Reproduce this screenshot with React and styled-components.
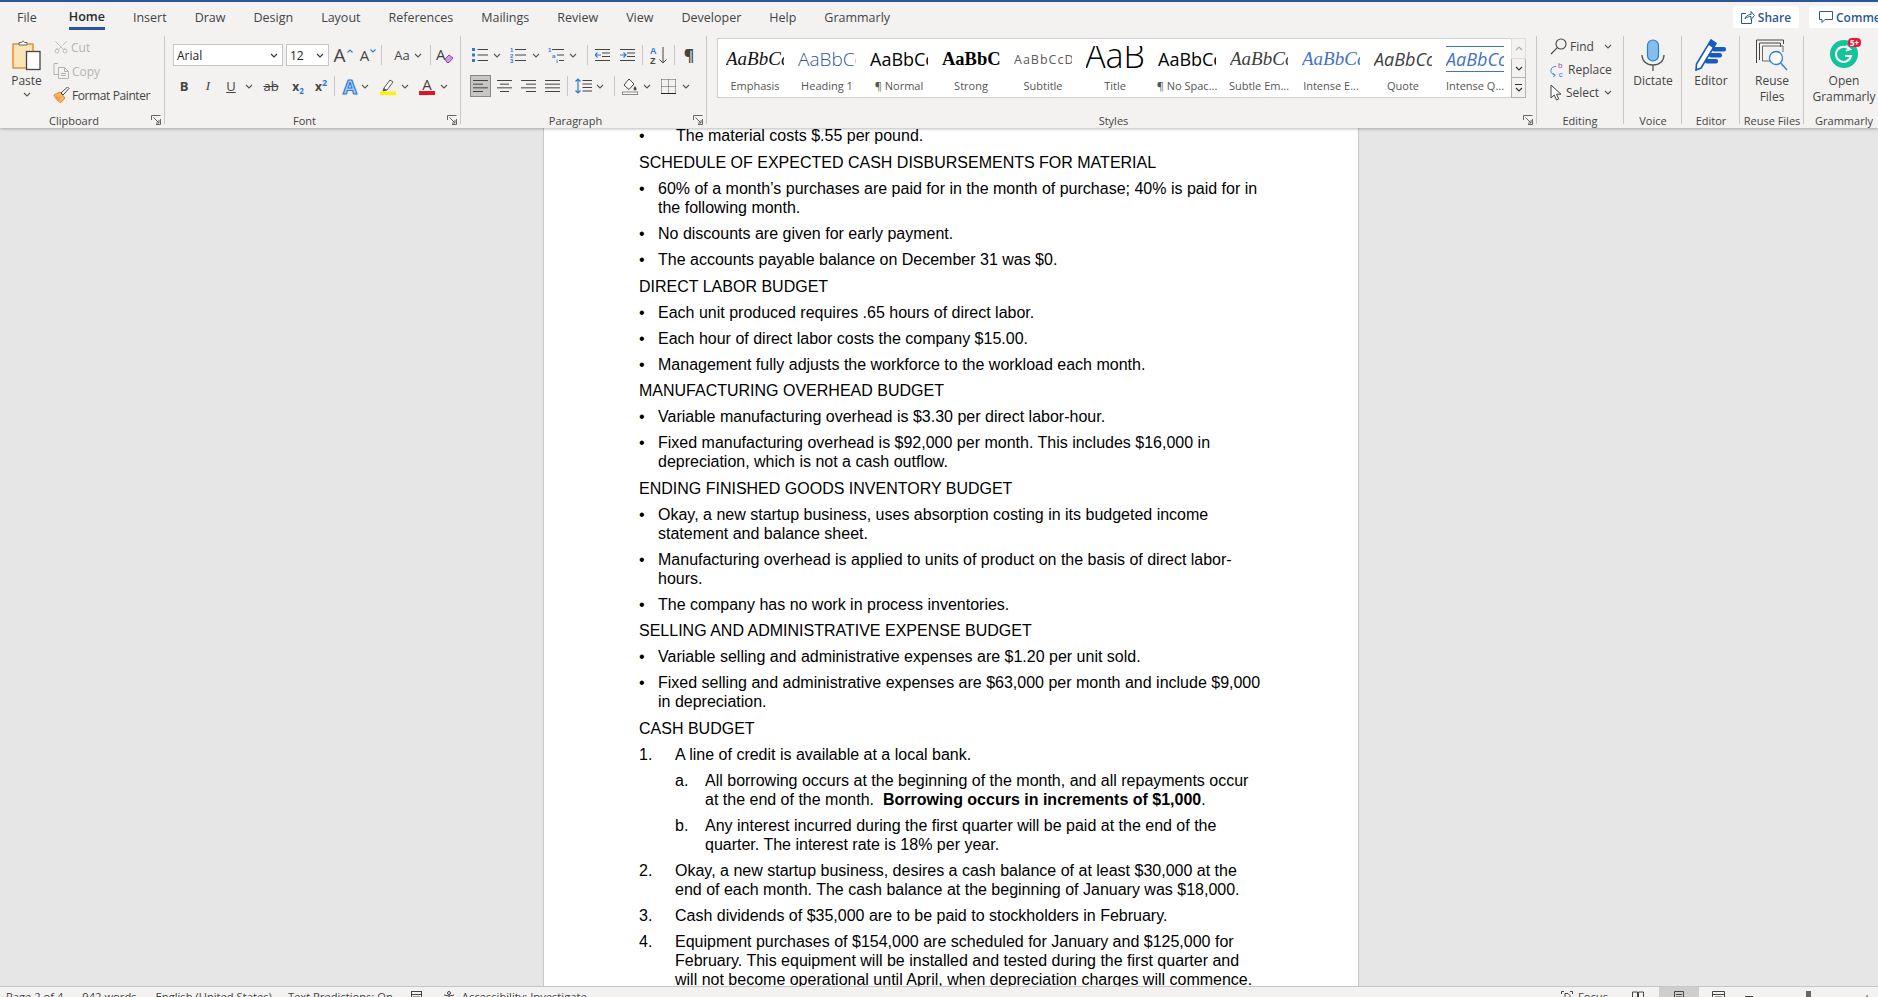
import React from 'react';
import styled, {createGlobalStyle} from 'styled-components';
import {Scissors} from 'lucide-react';

const UI_FONT = `'Open Sans', 'Noto Sans', sans-serif`;

const GlobalStyle = createGlobalStyle`
    * { box-sizing: border-box; }
    html, body { margin: 0; height: 100%; overflow: hidden; }
    body { font-family: ${UI_FONT}; background: #E6E6E6; }
    #root { height: 100%; }
`;

const Caret = ({color = '#555'}) => (
    <svg width="8" height="5" viewBox="0 0 8 5"><path d="M1 1l3 3 3-3" fill="none" stroke={color} strokeWidth="1.1"/></svg>
);

const Launcher = () => (
    <svg width="10" height="10" viewBox="0 0 10 10" fill="none" stroke="#666" strokeWidth="1">
        <path d="M.5 5V.5H9.500M9.500 4V9.500H5M2.500 2.500L8 8M5 8H8V5"/>
    </svg>
);

const SizeTick = ({up}) => (
    <TickSvg width="6" height="4" viewBox="0 0 6 4">
        <path d={up ? 'M.5 3.500L3 1l2.500 2.500' : 'M.5 .5L3 3 5.500 .5'} fill="none" stroke="#2B7CD3" strokeWidth="1.1"/>
    </TickSvg>
);

const Lines = ({rows, w = 15}) => (
    <svg width={w} height="16" viewBox={`0 0 ${w} 16`} stroke="#444" strokeWidth="1" fill="none">
        {rows.map(([x1, x2], i) => <path key={i} d={`M${x1} ${2.5 + i * 3.67}H${x2}`}/>)}
    </svg>
);

const PasteIcon = () => (
    <svg width="29" height="32" viewBox="0 0 29 32" fill="none">
        <rect x="1" y="4" width="20" height="24" fill="#FBE5B8" stroke="#E8862C" strokeWidth="1.4"/>
        <path d="M7 5V2.500h2.500L11 .8l1.600 1.700H15V5z" fill="#fff" stroke="#666"/>
        <rect x="14.500" y="11.500" width="13.500" height="18" fill="#fff" stroke="#444" strokeWidth="1.3"/>
    </svg>
);

const CopyIcon = () => (
    <svg width="17" height="16" viewBox="0 0 17 16" fill="none" stroke="#B5B3B1">
        <path d="M5 .5H1v11h4M5.500 4.500h6l4 4v7h-10zM11.500 4.500v4h4M8 10.500h5M8 12.500h5"/>
    </svg>
);

const PainterIcon = () => (
    <svg width="17" height="16" viewBox="0 0 17 16">
        <path d="M1 8l6-3 5 6-4 4.500C5 15 2 11 1 8z" fill="#F5B569" stroke="#E8862C"/>
        <path d="M3 10l2 1M5.500 13l1-3" stroke="#E8862C" fill="none"/>
        <path d="M8 6l2 2 6-6.500L14.500 0z" fill="#fff" stroke="#444"/>
    </svg>
);

const BulletsIcon = () => (
    <svg width="16" height="16" viewBox="0 0 16 16">
        <g fill="#2B7CD3"><rect y="1" width="3" height="3"/><rect y="6.500" width="3" height="3"/><rect y="12" width="3" height="3"/></g>
        <path d="M5.500 2.500H16M5.500 8H16M5.500 13.500H16" stroke="#444"/>
    </svg>
);

const SmallNum = ({x, y, children}) => <text x={x} y={y} fontSize="6" fontWeight="700" fill="#2B7CD3" fontFamily="Liberation Sans, sans-serif">{children}</text>;

const NumberingIcon = () => (
    <svg width="16" height="16" viewBox="0 0 16 16">
        <SmallNum x="0" y="5">1</SmallNum><SmallNum x="0" y="10.500">2</SmallNum><SmallNum x="0" y="16">3</SmallNum>
        <path d="M5 2.500H16M5 8H16M5 13.500H16" stroke="#444"/>
    </svg>
);

const MultilevelIcon = () => (
    <svg width="16" height="16" viewBox="0 0 16 16">
        <SmallNum x="0" y="5">1</SmallNum><SmallNum x="4" y="10.500">a</SmallNum><SmallNum x="8" y="16">i</SmallNum>
        <path d="M4 2.500H16M9 8H16M11 13.500H16" stroke="#444"/>
    </svg>
);

const IndentIcon = ({flip}) => (
    <svg width="15" height="14" viewBox="0 0 15 14" fill="none">
        <path d="M0 1.500H15M7 5H15M7 8.500H15M0 12.500H15" stroke="#444"/>
        <path d={flip ? 'M0 7H6M3.500 4.500L6 7 3.500 9.500' : 'M6 7H0M2.500 4.500L0 7l2.500 2.500'} stroke="#2B7CD3" strokeWidth="1.2"/>
    </svg>
);

const SortIcon = () => (
    <svg width="18" height="18" viewBox="0 0 18 18">
        <text x="0" y="8" fontSize="9" fontWeight="700" fill="#2B7CD3" fontFamily="Liberation Sans, sans-serif">A</text>
        <text x="0" y="17.500" fontSize="9" fontWeight="700" fill="#444" fontFamily="Liberation Sans, sans-serif">Z</text>
        <path d="M13 1V17M9.500 13.500L13 17l3.500-3.500" stroke="#444" fill="none"/>
    </svg>
);

const LineSpacingIcon = () => (
    <svg width="17" height="16" viewBox="0 0 17 16" fill="none">
        <path d="M3 1V15M.5 3.500L3 1l2.500 2.500M.5 12.500L3 15l2.500-2.500" stroke="#2B7CD3" strokeWidth="1.2"/>
        <path d="M7.500 2.500H17M7.500 6H17M7.500 9.500H17M7.500 13H17" stroke="#444"/>
    </svg>
);

const ShadingIcon = () => (
    <svg width="16" height="17" viewBox="0 0 16 17" fill="none">
        <path d="M7 1L2 7l5 4.500L12 6z" fill="#fff" stroke="#444"/>
        <path d="M13 8c1 1.500 1.500 2.200 1.500 3a1.400 1.400 0 01-2.900 0c0-.8.4-1.500 1.400-3z" fill="#444"/>
        <rect x=".5" y="14" width="15" height="2.500" fill="#fff" stroke="#888"/>
    </svg>
);

const BordersIcon = () => (
    <svg width="15" height="15" viewBox="0 0 15 15" fill="none">
        <path d="M.5.5H15M.5 7.500H15M.5.5V15M7.500.5V15M14.500.5V15" stroke="#555" strokeDasharray="1 1"/>
        <path d="M0 14.500H15" stroke="#222"/>
    </svg>
);

const FindIcon = () => (
    <svg width="17" height="17" viewBox="0 0 17 17" fill="none" stroke="#444" strokeWidth="1.1">
        <circle cx="11" cy="6" r="5"/><path d="M7.300 9.700L1 16"/>
    </svg>
);

const ReplaceIcon = () => (
    <svg width="15" height="17" viewBox="0 0 17 19" fill="none">
        <text x="9" y="8" fontSize="9" fill="#A24BB0" fontFamily="Liberation Sans, sans-serif">b</text>
        <text x="10" y="18" fontSize="9" fill="#2B7CD3" fontFamily="Liberation Sans, sans-serif">c</text>
        <path d="M7 6C3 6 1 8 1 11s2 4 5 5M3.500 13.500L6 16l-2.500 2" stroke="#2B7CD3"/>
    </svg>
);

const SelectIcon = () => (
    <svg width="13" height="17" viewBox="0 0 13 17">
        <path d="M1 1v13l3.200-3 2.300 5 2.300-1-2.300-4.800H11z" fill="#fff" stroke="#444"/>
    </svg>
);

const MicIcon = () => (
    <svg width="24" height="32" viewBox="0 0 24 32" fill="none">
        <rect x="6.500" y="1" width="11" height="21" rx="5.500" fill="#83BEEC" stroke="#2B7CD3" strokeWidth="1.2"/>
        <path d="M1 16c0 6 4.500 10 11 10s11-4 11-10M12 26v6" stroke="#555" strokeWidth="1.3"/>
    </svg>
);

const EditorIcon = () => (
    <svg width="32" height="32" viewBox="0 0 32 32" fill="none">
        <path d="M16 1l5 3.500L6 29l-5 2 .5-6z" fill="#fff" stroke="#185ABD" strokeWidth="1.6"/>
        <path d="M16 1l5 3.500-3 4.500-5-3.500z" fill="#185ABD"/>
        <rect x="17" y="8" width="14" height="4.500" rx="2" fill="#185ABD"/>
        <rect x="14" y="14" width="13" height="4.500" rx="2" fill="#185ABD"/>
        <rect x="10" y="20" width="13" height="4.500" rx="2" fill="#185ABD"/>
    </svg>
);

const ReuseIcon = () => (
    <svg width="32" height="32" viewBox="0 0 32 32" fill="none">
        <path d="M.5 24V1H27.500V5M3.500 21V4H24.500V8" stroke="#444"/>
        <path d="M6.500 22V7H27V13" stroke="#666"/>
        <path d="M6.500 22H14" stroke="#666"/>
        <circle cx="20" cy="19" r="6.500" fill="#fff" stroke="#2B7CD3" strokeWidth="1.3"/>
        <path d="M24.700 24L31 31" stroke="#2B7CD3" strokeWidth="1.4"/>
    </svg>
);

const GrammarlyIcon = () => (
    <svg width="30" height="30" viewBox="0 0 30 30">
        <circle cx="15" cy="15" r="14" fill="#15C39A"/>
        <path d="M20.500 10.500A7.600 7.600 0 1 0 22 17h-6" fill="none" stroke="#fff" strokeWidth="2"/>
        <path d="M17 6.500l4.500 3.800-4.800 1.400" fill="none" stroke="#fff" strokeWidth="1.6"/>
    </svg>
);

const ShareIcon = () => (
    <svg width="14" height="14" viewBox="0 0 14 14" fill="none" stroke="#2B579A">
        <path d="M5 3.500H.5v10h10V9M4 9c.5-3 3-4.500 6-4.500V1.500l3.500 4-3.500 4v-3C8 6.500 5.500 7 4 9z"/>
    </svg>
);

const CommentIcon = () => (
    <svg width="14" height="14" viewBox="0 0 14 14" fill="none" stroke="#2B579A">
        <path d="M.5 1.500h13v8H6L3 12.500v-3H.5z"/>
    </svg>
);

const ClearIcon = () => (
    <svg width="18" height="18" viewBox="0 0 18 18" fill="none">
        <text x="0" y="14" fontSize="15" fill="#444" fontFamily="Open Sans, sans-serif">A</text>
        <path d="M9 13l4-4 4 3-4 4.500h-2z" fill="#C9A0DC" stroke="#8E3FA8"/>
    </svg>
);

const HighlightIcon = () => (
    <svg width="16" height="17" viewBox="0 0 16 17" fill="none">
        <path d="M4 10l6-8 3 2-6 8-4 1z" fill="#fff" stroke="#555"/>
        <path d="M4 10l3 2-4 1z" fill="#555"/>
        <rect y="13.500" width="16" height="3.500" fill="#FFF200"/>
    </svg>
);

const tabs = ['File', 'Home', 'Insert', 'Draw', 'Design', 'Layout', 'References', 'Mailings', 'Review', 'View', 'Developer', 'Help', 'Grammarly'];

const styleItems = [
    {label: 'Emphasis', kind: 'emphasis', text: 'AaBbCcDd'},
    {label: 'Heading 1', kind: 'heading', text: 'AaBbCcDd'},
    {label: '¶ Normal', kind: 'normal', text: 'AaBbCcDd'},
    {label: 'Strong', kind: 'strong', text: 'AaBbCcDd'},
    {label: 'Subtitle', kind: 'subtitle', text: 'AaBbCcDd'},
    {label: 'Title', kind: 'title', text: 'AaB'},
    {label: '¶ No Spac...', kind: 'normal', text: 'AaBbCcDd'},
    {label: 'Subtle Em...', kind: 'subtle', text: 'AaBbCcDd'},
    {label: 'Intense E...', kind: 'intense', text: 'AaBbCcDd'},
    {label: 'Quote', kind: 'quote', text: 'AaBbCcDd'},
    {label: 'Intense Q...', kind: 'intenseQuote', text: 'AaBbCcDd'}
];

const doc = [
    {type: 'bullet', wide: true, lines: ['The material costs $.55 per pound.']},
    {type: 'head', lines: ['SCHEDULE OF EXPECTED CASH DISBURSEMENTS FOR MATERIAL']},
    {type: 'bullet', lines: ['60% of a month’s purchases are paid for in the month of purchase; 40% is paid for in', 'the following month.']},
    {type: 'bullet', lines: ['No discounts are given for early payment.']},
    {type: 'bullet', lines: ['The accounts payable balance on December 31 was $0.']},
    {type: 'head', lines: ['DIRECT LABOR BUDGET']},
    {type: 'bullet', lines: ['Each unit produced requires .65 hours of direct labor.']},
    {type: 'bullet', lines: ['Each hour of direct labor costs the company $15.00.']},
    {type: 'bullet', lines: ['Management fully adjusts the workforce to the workload each month.']},
    {type: 'head', lines: ['MANUFACTURING OVERHEAD BUDGET']},
    {type: 'bullet', lines: ['Variable manufacturing overhead is $3.30 per direct labor-hour.']},
    {type: 'bullet', lines: ['Fixed manufacturing overhead is $92,000 per month. This includes $16,000 in', 'depreciation, which is not a cash outflow.']},
    {type: 'head', lines: ['ENDING FINISHED GOODS INVENTORY BUDGET']},
    {type: 'bullet', lines: ['Okay, a new startup business, uses absorption costing in its budgeted income', 'statement and balance sheet.']},
    {type: 'bullet', lines: ['Manufacturing overhead is applied to units of product on the basis of direct labor-', 'hours.']},
    {type: 'bullet', lines: ['The company has no work in process inventories.']},
    {type: 'head', lines: ['SELLING AND ADMINISTRATIVE EXPENSE BUDGET']},
    {type: 'bullet', lines: ['Variable selling and administrative expenses are $1.20 per unit sold.']},
    {type: 'bullet', lines: ['Fixed selling and administrative expenses are $63,000 per month and include $9,000', 'in depreciation.']},
    {type: 'head', lines: ['CASH BUDGET']},
    {type: 'number', mark: '1.', lines: ['A line of credit is available at a local bank.']},
    {type: 'sub', mark: 'a.', lines: ['All borrowing occurs at the beginning of the month, and all repayments occur', <>at the end of the month.&nbsp; <b>Borrowing occurs in increments of $1,000</b>.</>]},
    {type: 'sub', mark: 'b.', lines: ['Any interest incurred during the first quarter will be paid at the end of the', 'quarter. The interest rate is 18% per year.']},
    {type: 'number', mark: '2.', lines: ['Okay, a new startup business, desires a cash balance of at least $30,000 at the', 'end of each month. The cash balance at the beginning of January was $18,000.']},
    {type: 'number', mark: '3.', lines: ['Cash dividends of $35,000 are to be paid to stockholders in February.']},
    {type: 'number', mark: '4.', lines: ['Equipment purchases of $154,000 are scheduled for January and $125,000 for', 'February. This equipment will be installed and tested during the first quarter and', 'will not become operational until April, when depreciation charges will commence.']}
];

function DocBlock({item}) {
    const text = item.lines.map((line, i) => <div key={i}>{line}</div>);
    if (item.type === 'head') return <Para>{text}</Para>;
    if (item.type === 'bullet') {
        return <Para $row><Marker $w={item.wide ? 37 : 19}>•</Marker><div>{text}</div></Para>;
    }
    if (item.type === 'number') return <Para $row><Marker $w={36}>{item.mark}</Marker><div>{text}</div></Para>;
    return <Para $row $inset={36}><Marker $w={30}>{item.mark}</Marker><div>{text}</div></Para>;
}

function Group({w, title, launcher, last, shift, children}) {
    return (
        <GroupBox $w={w} $last={last} $shift={shift}>
            <GroupBody>{children}</GroupBody>
            <GroupFoot>
                <GroupTitle>{title}</GroupTitle>
                {launcher && <FootEnd><Launcher/></FootEnd>}
            </GroupFoot>
        </GroupBox>
    );
}

export default function App() {
    return (
        <Window>
            <GlobalStyle/>
            <Ribbon>
                <TabRow>
                    {tabs.map(t => <Tab key={t} $active={t === 'Home'}><span>{t}</span></Tab>)}
                    <TopButtons>
                        <TopButton $w={66}><ShareIcon/>Share</TopButton>
                        <TopButton $w={100}><CommentIcon/>Comments</TopButton>
                    </TopButtons>
                </TabRow>
                <Groups>
                    <Group w={165} title="Clipboard" launcher>
                        <ClipboardBody>
                            <PasteButton>
                                <PasteIcon/>
                                <span>Paste</span>
                                <Caret/>
                            </PasteButton>
                            <ClipList>
                                <ClipRow $off><CutIcon size={16} color="#B5B3B1" strokeWidth={1.2}/>Cut</ClipRow>
                                <ClipRow $off><CopyIcon/>Copy</ClipRow>
                                <ClipRow $tight><PainterIcon/>Format Painter</ClipRow>
                            </ClipList>
                        </ClipboardBody>
                    </Group>
                    <Group w={296} title="Font" launcher>
                        <Rows>
                            <Row>
                                <Combo $w={110}>Arial<Caret color="#333"/></Combo>
                                <Combo $w={43} $ml={3}>12<Caret color="#333"/></Combo>
                                <Cell $w={20} $ml={4}><Glyph $size={19}>A</Glyph><SizeTick up/></Cell>
                                <Cell $w={20} $ml={5}><Glyph $size={15}>A</Glyph><SizeTick/></Cell>
                                <Sep $ml={3}/>
                                <Cell $w={26} $ml={7}><Glyph $size={13}>Aa</Glyph></Cell>
                                <Cell $w={10} $ml={-2}><Caret/></Cell>
                                <Sep $ml={7}/>
                                <Cell $w={22} $ml={3}><ClearIcon/></Cell>
                            </Row>
                            <Row>
                                <Cell $w={22}><Glyph $size={13} $bold>B</Glyph></Cell>
                                <Cell $w={22} $ml={2}><Glyph $size={13} $italic $serif>I</Glyph></Cell>
                                <Cell $w={22} $ml={1}><Glyph $size={13} $under>U</Glyph></Cell>
                                <Cell $w={12} $ml={1}><Caret/></Cell>
                                <Cell $w={22} $ml={5}><Glyph $size={13} $strike>ab</Glyph></Cell>
                                <Cell $w={22} $ml={5}><Glyph $size={12} $bold>x<Sub>2</Sub></Glyph></Cell>
                                <Cell $w={22} $ml={1}><Glyph $size={12} $bold>x<Sup>2</Sup></Glyph></Cell>
                                <Sep $ml={2}/>
                                <Cell $w={22} $ml={4}><TextEffect>A</TextEffect></Cell>
                                <Cell $w={8}><Caret/></Cell>
                                <Cell $w={22} $ml={8}><HighlightIcon/></Cell>
                                <Cell $w={10} $ml={1}><Caret/></Cell>
                                <Cell $w={22} $ml={6}><ColorA>A</ColorA></Cell>
                                <Cell $w={10} $ml={1}><Caret/></Cell>
                            </Row>
                        </Rows>
                    </Group>
                    <Group w={246} title="Paragraph" launcher>
                        <Rows>
                            <Row>
                                <Cell $w={21}><BulletsIcon/></Cell>
                                <Cell $w={13}><Caret/></Cell>
                                <Cell $w={24} $ml={3}><NumberingIcon/></Cell>
                                <Cell $w={12}><Caret/></Cell>
                                <Cell $w={22} $ml={3}><MultilevelIcon/></Cell>
                                <Cell $w={12}><Caret/></Cell>
                                <Sep $ml={8}/>
                                <Cell $w={21} $ml={4}><IndentIcon/></Cell>
                                <Cell $w={22} $ml={3}><IndentIcon flip/></Cell>
                                <Sep $ml={4}/>
                                <Cell $w={23} $ml={4}><SortIcon/></Cell>
                                <Sep $ml={4}/>
                                <Cell $w={20} $ml={4}><Glyph $size={16} $bold>¶</Glyph></Cell>
                            </Row>
                            <Row>
                                <Cell $w={21} $ml={1} $active><Lines rows={[[0, 15], [0, 10], [0, 15], [0, 10]]}/></Cell>
                                <Cell $w={22} $ml={2}><Lines rows={[[0, 15], [3, 12], [0, 15], [3, 12]]}/></Cell>
                                <Cell $w={22} $ml={2}><Lines rows={[[0, 15], [5, 15], [0, 15], [5, 15]]}/></Cell>
                                <Cell $w={22} $ml={2}><Lines rows={[[0, 15], [0, 15], [0, 15], [0, 15]]}/></Cell>
                                <Sep $ml={4}/>
                                <Cell $w={22} $ml={4}><LineSpacingIcon/></Cell>
                                <Cell $w={12}><Caret/></Cell>
                                <Sep $ml={8}/>
                                <Cell $w={22} $ml={4}><ShadingIcon/></Cell>
                                <Cell $w={12}><Caret/></Cell>
                                <Cell $w={23} $ml={4}><BordersIcon/></Cell>
                                <Cell $w={12}><Caret/></Cell>
                            </Row>
                        </Rows>
                    </Group>
                    <Group w={830} title="Styles" launcher>
                        <Gallery>
                            {styleItems.map(s => (
                                <StyleItem key={s.label + s.kind}>
                                    <Preview $kind={s.kind}>{s.text}</Preview>
                                    <span>{s.label}</span>
                                </StyleItem>
                            ))}
                            <GalleryScroll>
                                <ScrollBtn $off><Caret color="#AAA"/></ScrollBtn>
                                <ScrollBtn><Caret color="#333"/></ScrollBtn>
                                <ScrollBtn $more><Caret color="#333"/></ScrollBtn>
                            </GalleryScroll>
                        </Gallery>
                    </Group>
                    <Group w={87} title="Editing">
                        <EditList>
                            <EditRow><FindIcon/>Find<EditCaret $gap={7}><Caret/></EditCaret></EditRow>
                            <EditRow><ReplaceIcon/>Replace</EditRow>
                            <EditRow><SelectIcon/>Select<EditCaret $gap={2}><Caret/></EditCaret></EditRow>
                        </EditList>
                    </Group>
                    <Group w={58} shift={1} title="Voice"><BigButton><MicIcon/><span>Dictate</span></BigButton></Group>
                    <Group w={58} shift={1} title="Editor"><BigButton><EditorIcon/><span>Editor</span></BigButton></Group>
                    <Group w={64} shift={1} title="Reuse Files"><BigButton><ReuseIcon/><span>Reuse<br/>Files</span></BigButton></Group>
                    <Group w={74} shift={6} title="Grammarly" last>
                        <BigButton>
                            <BadgeWrap><GrammarlyIcon/><Badge>5+</Badge></BadgeWrap>
                            <span>Open<br/>Grammarly</span>
                        </BigButton>
                    </Group>
                </Groups>
            </Ribbon>
            <Canvas>
                <Page>
                    {doc.map((item, i) => <DocBlock key={i} item={item}/>)}
                </Page>
            </Canvas>
            <StatusBar>
                <StatusText $ml={6}>Page 2 of 4</StatusText>
                <StatusText $ml={19}>942 words</StatusText>
                <StatusText $ml={19}>English (United States)</StatusText>
                <StatusText $ml={16}>Text Predictions: On</StatusText>
                <StatusIcon $ml={18}><rect x=".5" y=".5" width="10" height="11" fill="none" stroke="#444"/><path d="M.5 3.500h10M2 6h7M2 8.500h5" stroke="#444"/></StatusIcon>
                <StatusIcon $ml={19}><circle cx="6" cy="2" r="1.500" fill="none" stroke="#444"/><path d="M1 4l5 1 5-1M6 5v3M3 12l3-4 3 4" stroke="#444" fill="none"/></StatusIcon>
                <StatusText $ml={6}>Accessibility: Investigate</StatusText>
                <StatusRight>
                    <StatusIcon><path d="M.5 3V.5H3M9 .5h2.500V3M.5 9v2.500H3M4 2.500h3l2 2v7H4z" fill="none" stroke="#444"/></StatusIcon>
                    <StatusText $ml={4}>Focus</StatusText>
                    <StatusIcon $ml={24}><path d="M.5 1h5v11h-5zM6.500 1h5v11h-5z" fill="none" stroke="#444"/></StatusIcon>
                    <ActiveView $ml={14}><StatusIcon><path d="M1.500.5h9v12h-9zM3 3.500h6M3 6h6M3 8.500h6" fill="none" stroke="#444"/></StatusIcon></ActiveView>
                    <StatusIcon $ml={13}><path d="M.5.5h12v12H.5zM.5 3.500h12M3 6h7M3 8.500h4" fill="none" stroke="#444"/></StatusIcon>
                    <ZoomMinus/>
                    <ZoomThumb/>
                    <ZoomPlus>+</ZoomPlus>
                </StatusRight>
            </StatusBar>
        </Window>
    );
}

const TickSvg = styled.svg`
    flex: none;
    margin: -8px 0 0 1px;
`;

const CutIcon = styled(Scissors)`
    transform: rotate(-90deg);
`;

const Window = styled.div`
    height: 100vh;
    display: flex;
    flex-direction: column;
    overflow: hidden;
`;

const Ribbon = styled.header`
    flex: none;
    height: 128px;
    border-top: 2px solid #2B579A;
    background: #F3F2F1;
    box-shadow: 0 1px 3px rgba(0, 0, 0, .28);
    position: relative;
    z-index: 1;
`;

const TabRow = styled.nav`
    height: 31px;
    padding: 1px 0 0 3px;
    display: flex;
    align-items: center;
`;

const Tab = styled.div`
    padding: 0 14px;
    height: 30px;
    display: flex;
    font-size: 12.5px;
    color: ${p => (p.$active ? '#2B2B2B' : '#444')};
    font-weight: ${p => (p.$active ? 600 : 400)};

    &:first-child { margin-right: 4px; }

    span {
        height: ${p => (p.$active ? 27 : 28)}px;
        padding-top: ${p => (p.$active ? 3 : 0)}px;
        display: flex;
        align-items: center;
        border-bottom: ${p => (p.$active ? '3px solid #2B579A' : 'none')};
    }
`;

const TopButtons = styled.div`
    margin: -2px -31px 0 auto;
    display: flex;
    gap: 10px;
`;

const TopButton = styled.div`
    flex: none;
    width: ${p => p.$w}px;
    height: 22px;
    background: #FFF;
    border-radius: 2px;
    display: flex;
    align-items: center;
    justify-content: center;
    gap: 3px;
    font-size: 12px;
    font-weight: 600;
    color: #2B579A;
`;

const Groups = styled.div`
    margin-top: 3px;
    height: 88px;
    display: flex;
`;

const GroupBox = styled.section`
    flex: none;
    width: ${p => p.$w}px;
    padding-left: ${p => p.$shift || 0}px;
    display: flex;
    flex-direction: column;
    border-right: ${p => (p.$last ? 'none' : '1px solid #C8C6C4')};
`;

const GroupBody = styled.div`
    flex: 1;
    min-height: 0;
`;

const GroupFoot = styled.div`
    flex: none;
    height: 16px;
    margin-bottom: -4px;
    display: flex;
    align-items: center;
`;

const GroupTitle = styled.span`
    flex: 1;
    font-size: 11px;
    text-align: center;
    color: #444;
    white-space: nowrap;
`;

const FootEnd = styled.span`
    flex: none;
    width: 16px;
    display: flex;
    justify-content: flex-end;
    padding-right: 3px;
`;

const ClipboardBody = styled.div`
    display: flex;
    height: 100%;
`;

const PasteButton = styled.div`
    flex: none;
    width: 53px;
    padding-top: 4px;
    display: flex;
    flex-direction: column;
    align-items: center;
    font-size: 12px;
    color: #444;

    span { margin: 1px 0 3px; line-height: 16px; }
`;

const ClipList = styled.div`
    margin-top: -1px;
    display: flex;
    flex-direction: column;
`;

const ClipRow = styled.div`
    height: 24px;
    display: flex;
    align-items: center;
    gap: 2px;
    font-size: 12px;
    letter-spacing: ${p => (p.$tight ? '-.4px' : '0')};
    white-space: nowrap;
    color: ${p => (p.$off ? '#B5B3B1' : '#444')};
`;

const Rows = styled.div`
    padding: 8px 0 0 8px;
    display: flex;
    flex-direction: column;
    gap: 9px;
`;

const Row = styled.div`
    height: 22px;
    display: flex;
    align-items: center;
`;

const Combo = styled.div`
    flex: none;
    width: ${p => p.$w}px;
    height: 22px;
    margin-left: ${p => p.$ml || 0}px;
    padding: 0 4px 0 3px;
    display: flex;
    align-items: center;
    justify-content: space-between;
    background: #FFF;
    border: 1px solid #C8C6C4;
    font-size: 12px;
    color: #222;
`;

const Cell = styled.div`
    flex: none;
    width: ${p => p.$w}px;
    height: 22px;
    margin-left: ${p => p.$ml || 0}px;
    display: flex;
    align-items: center;
    justify-content: center;
    background: ${p => (p.$active ? '#C8C6C4' : 'none')};
    border: ${p => (p.$active ? '1px solid #8A8886' : 'none')};
`;

const Sep = styled.div`
    flex: none;
    width: 1px;
    height: 20px;
    margin-left: ${p => p.$ml || 0}px;
    background: #C8C6C4;
`;

const Glyph = styled.span`
    font-family: ${p => (p.$serif ? `'Liberation Serif', serif` : UI_FONT)};
    font-size: ${p => p.$size}px;
    font-weight: ${p => (p.$bold ? 700 : 400)};
    font-style: ${p => (p.$italic ? 'italic' : 'normal')};
    text-decoration: ${p => (p.$under ? 'underline' : p.$strike ? 'line-through' : 'none')};
    color: #444;
    white-space: nowrap;
`;

const Sup = styled.sup`
    font-size: 9px;
    color: #2B7CD3;
    vertical-align: 5px;
    line-height: 0;
`;

const Sub = styled.sub`
    font-size: 8px;
    color: #2B7CD3;
    vertical-align: -3px;
    line-height: 0;
`;

const TextEffect = styled.span`
    font-size: 20px;
    font-weight: 700;
    color: #A9CFF0;
    -webkit-text-stroke: 1.2px #2B7CD3;
`;

const ColorA = styled.span`
    width: 16px;
    height: 18px;
    line-height: 14px;
    text-align: center;
    font-size: 15px;
    color: #444;
    border-bottom: 4px solid #E81123;
`;

const Gallery = styled.div`
    margin: 2px 0 0 10px;
    width: 808px;
    height: 60px;
    display: flex;
    padding-left: 1px;
    background: #FFF;
    border: 1px solid #D2D0CE;
`;

const StyleItem = styled.div`
    flex: none;
    width: 72px;
    display: flex;
    flex-direction: column;
    align-items: center;
    overflow: hidden;

    > span:last-child {
        height: 18px;
        margin-top: 5px;
        font-size: 11px;
        line-height: 18px;
        color: #555;
        white-space: nowrap;
    }
`;

const previewKinds = {
    emphasis: `font: italic 19px 'Liberation Serif', serif; color: #111;`,
    heading: `font: 300 19px 'Open Sans', sans-serif; color: #2F5496;`,
    normal: `font: 500 18px 'Open Sans', sans-serif; color: #000;`,
    strong: `font: 700 18.5px 'Liberation Serif', serif; color: #000;`,
    subtitle: `font: 400 12.5px 'Open Sans', sans-serif; color: #5A5A5A; letter-spacing: 1px;`,
    title: `font: 300 34px 'Open Sans', sans-serif; color: #000; line-height: 26px; padding-bottom: 8px;`,
    subtle: `font: italic 19px 'Liberation Serif', serif; color: #404040;`,
    intense: `font: italic 19px 'Liberation Serif', serif; color: #4472C4;`,
    quote: `font: italic 400 18px 'Open Sans', sans-serif; color: #404040;`,
    intenseQuote: `font: italic 400 18px 'Open Sans', sans-serif; color: #4472C4; border-top: 1px solid #4472C4; border-bottom: 1px solid #4472C4;`
};

const Preview = styled.div`
    width: 58px;
    height: 26px;
    margin-top: 7px;
    display: flex;
    align-items: center;
    justify-content: ${p => (p.$kind === 'title' ? 'center' : 'flex-start')};
    overflow: hidden;
    white-space: nowrap;
    ${p => previewKinds[p.$kind]}
`;

const GalleryScroll = styled.div`
    flex: none;
    margin: -1px -1px -1px auto;
    width: 15px;
    display: flex;
    flex-direction: column;
`;

const ScrollBtn = styled.div`
    flex: 1;
    display: flex;
    flex-direction: column;
    gap: 2px;
    align-items: center;
    justify-content: center;
    background: #F3F2F1;
    border: 1px solid #B5B3B1;
    border-top-width: ${p => (p.$off ? 1 : 0)}px;
    border-color: ${p => (p.$off ? '#DDD' : '#B5B3B1')};

    svg { transform: ${p => (p.$off ? 'rotate(180deg)' : 'none')}; }

    &::before {
        content: '';
        display: ${p => (p.$more ? 'block' : 'none')};
        width: 7px;
        height: 1px;
        background: #333;
    }
`;

const EditList = styled.div`
    margin-top: -1px;
    padding-left: 13px;
    display: flex;
    flex-direction: column;
`;

const EditRow = styled.div`
    height: 23px;
    display: flex;
    align-items: center;
    gap: 3px;
    font-size: 12px;
    color: #444;
    white-space: nowrap;
`;

const EditCaret = styled.span`
    display: flex;
    margin-left: ${p => p.$gap}px;
`;

const BigButton = styled.div`
    padding-top: 3px;
    display: flex;
    flex-direction: column;
    align-items: center;
    gap: 2px;
    font-size: 12px;
    color: #444;
    text-align: center;

    span { line-height: 16px; white-space: nowrap; }
`;

const BadgeWrap = styled.div`
    position: relative;
    height: 32px;
`;

const Badge = styled.div`
    position: absolute;
    top: -1px;
    right: -2px;
    width: 13px;
    height: 9px;
    border-radius: 4px;
    background: #E8173A;
    color: #FFF;
    font-size: 8px;
    font-weight: 700;
    line-height: 9px;
    text-align: center;
`;

const Canvas = styled.main`
    flex: 1;
    min-height: 0;
    overflow: hidden;
    padding-left: 543px;
    background: #E6E6E6;
`;

const Page = styled.article`
    width: 816px;
    min-height: 100%;
    margin-top: -2px;
    padding-left: 95px;
    background: #FFF;
    border-left: 1px solid #C6C6C6;
    border-right: 1px solid #C6C6C6;
    font-family: 'Liberation Sans', Arial, sans-serif;
    font-size: 16px;
    line-height: 19px;
    color: #000;
`;

const Para = styled.div`
    margin: 0 0 7.15px ${p => p.$inset || 0}px;
    display: flex;
    flex-direction: ${p => (p.$row ? 'row' : 'column')};
    white-space: nowrap;

    &:first-child { margin-bottom: 8px; }
`;

const Marker = styled.span`
    flex: none;
    width: ${p => p.$w}px;
`;

const StatusBar = styled.footer`
    flex: none;
    height: 11px;
    padding-top: 4px;
    overflow: hidden;
    display: flex;
    align-items: flex-start;
    background: #F3F2F1;
    border-top: 1px solid #C8C6C4;
    position: relative;
    z-index: 2;
`;

const StatusText = styled.span`
    flex: none;
    margin: -2px 0 0 ${p => p.$ml || 0}px;
    font-size: 11.2px;
    line-height: 16px;
    color: #444;
    white-space: nowrap;
`;

const StatusIcon = styled.svg.attrs({width: 13, height: 13, viewBox: '0 0 13 13'})`
    flex: none;
    margin-left: ${p => p.$ml || 0}px;
`;

const StatusRight = styled.div`
    margin-left: auto;
    width: 317px;
    display: flex;
    align-items: flex-start;
`;

const ActiveView = styled.div`
    flex: none;
    width: 40px;
    height: 26px;
    margin: -4px 0 0 ${p => p.$ml}px;
    padding-top: 4px;
    display: flex;
    justify-content: center;
    background: #D0CECD;
`;

const ZoomMinus = styled.div`
    flex: none;
    width: 8px;
    height: 1px;
    margin: 5px 0 0 20px;
    background: #444;
`;

const ZoomThumb = styled.div`
    flex: none;
    width: 5px;
    height: 14px;
    margin: 0 0 0 53px;
    background: #666;
`;

const ZoomPlus = styled.span`
    flex: none;
    margin: -2px 0 0 52px;
    font-size: 14px;
    color: #444;
`;
